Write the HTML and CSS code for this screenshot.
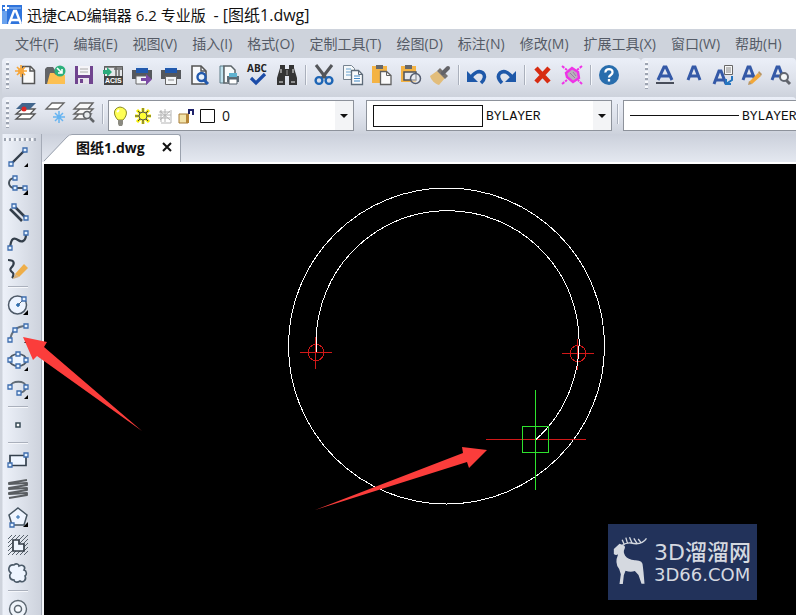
FILE: index.html
```html
<!DOCTYPE html>
<html lang="zh-CN">
<head>
<meta charset="utf-8">
<title>迅捷CAD编辑器 6.2 专业版 - [图纸1.dwg]</title>
<link rel="stylesheet" href="styles.css">
</head>
<body>
<div class="app">
  <header class="titlebar">
    <svg class="app-icon" width="20" height="21" viewBox="0 0 20 21"><path d="M0 1h20v19H0z" fill="#2f74dc"/><path d="M1 4h18M4 1v19" stroke="#a9cbf7"/><path d="M0 7h4v13H0z" fill="#69a2ee"/><path d="M3 1h2v2h2v2H5v2H3V5H1V3h2z" fill="#fff"/><path d="M7 20 12 7h2l5 13M9 16h8" fill="none" stroke="#fff" stroke-width="2.400"/></svg>
    <h1>迅捷CAD编辑器 6.2 专业版&nbsp; <span>- [图纸1.dwg]</span></h1>
  </header>

  <nav class="menubar" aria-label="菜单">
    <button>文件(F)</button><button>编辑(E)</button><button>视图(V)</button><button>插入(I)</button><button>格式(O)</button><button>定制工具(T)</button><button>绘图(D)</button><button>标注(N)</button><button>修改(M)</button><button>扩展工具(X)</button><button>窗口(W)</button><button>帮助(H)</button>
  </nav>

  <div class="row">
    <div class="toolbar standard">
      <span class="grip"></span>
      <button class="tool" aria-label="新建"><svg viewBox="0 0 20 20"><path d="M6.500 1.500h8l4 4v13h-12z" fill="#fafafa" stroke="#555" stroke-width="1.500"/><path d="M14 1v5h5" fill="none" stroke="#555" stroke-width="1.500"/><path d="M5 0v12M-1 6h12M1 2l8 8M9 2l-8 8" stroke="#f6a63b" stroke-width="1.700"/><circle cx="5" cy="6" r="3" fill="#f6a63b"/></svg></button>
      <button class="tool" aria-label="打开"><svg viewBox="0 0 20 20"><path d="M0 19V4l2-2h6l2 3h6v14z" fill="#626468"/><path d="m2 19 3-11h4l2 2h9v9z" fill="#fcc052"/><circle cx="15" cy="6" r="5.500" fill="#2cb07c"/><path d="m12 3 5 5m0-4v4h-4" fill="none" stroke="#fff" stroke-width="1.600"/></svg></button>
      <button class="tool" aria-label="保存"><svg viewBox="0 0 20 20"><path d="M1 1h18v18H1z" fill="#70448f"/><path d="M4 1h12v9H4z" fill="#f5f4f8"/><path d="M6 4h8M6 7h8" stroke="#aaa"/><path d="M4 13h11v6H4z" fill="#e7e4ec"/><path d="M6 14h3v4H6z" fill="#70448f"/></svg></button>
      <button class="tool" aria-label="导入ACIS"><svg viewBox="0 0 20 20"><path d="M1.500 1.500h18v11h-18z" fill="#e4e7ea" stroke="#555"/><path d="M1 2h19M13 2v9M16 5v6M11 4h8" stroke="#666" stroke-width="1.500"/><path d="M0 5h4V2l5 5-5 5V9H0z" fill="#2baa7b"/><path d="M1 11h19v9H1z" fill="#444"/><text x="2" y="18" class="acis">ACIS</text></svg></button>
      <button class="tool" aria-label="输出"><svg viewBox="0 0 20 20"><path d="M0 5h20v9H0z" fill="#55585d"/><path d="M4 0h12v5H4z" fill="#dce7f6"/><path d="M4 3h12v5H4z" fill="#2259ad"/><path d="M4 11h11v8H4z" fill="#f4f6f8" stroke="#666"/><path d="M9 13h5V9l6 5.500-6 5.500v-4H9z" fill="#7b4aa5"/></svg></button>
      <button class="tool" aria-label="打印"><svg viewBox="0 0 20 20"><path d="M0 5h20v9H0z" fill="#55585d"/><path d="M4 0h12v5H4z" fill="#dce7f6"/><path d="M4 3h12v5H4z" fill="#2259ad"/><path d="M4.500 11.500h11v8h-11z" fill="#f4f6f8" stroke="#666"/><path d="M7 15h6" stroke="#888"/></svg></button>
      <button class="tool" aria-label="打印预览"><svg viewBox="0 0 20 20"><path d="M2 1h9l5 5v13H2z" fill="#f8f9fb" stroke="#555" stroke-width="1.600"/><path d="M11 1v5h5" fill="none" stroke="#555" stroke-width="1.400"/><circle cx="11.500" cy="12" r="4" fill="#e9f1fa" stroke="#2259ad" stroke-width="2.400"/><path d="m14 15 4 4" stroke="#2259ad" stroke-width="3"/></svg></button>
      <button class="tool" aria-label="页面设置"><svg viewBox="0 0 20 20"><path d="M1 1h4v17H1z" fill="#bfe2ee" stroke="#5b7b87"/><path d="M5 1h7l4 4v13H5z" fill="#f7fafb" stroke="#5b6368" stroke-width="1.500"/><path d="M8 11h12v6H8z" fill="#5f6d78"/><path d="M10 8h8v4h-8z" fill="#5fb2d0"/><path d="M10 14h8v5h-8z" fill="#fff" stroke="#55616a"/></svg></button>
      <button class="tool" aria-label="拼写检查"><svg viewBox="0 0 20 20"><text x="-1" y="7" class="abc">ABC</text><path d="m3 13 5 5 9-9" fill="none" stroke="#1c4ca8" stroke-width="3.200"/></svg></button>
      <button class="tool" aria-label="查找"><svg viewBox="0 0 20 20"><path d="M3 3V0h5v4h4V0h5v3l3 10v7h-8v-9H8v9H0v-7z" fill="#343434"/><path d="M4 4v4M16 4v4M2 17h4M14 17h4" stroke="#eee"/><path d="M10 5v5" stroke="#999"/></svg></button>
      <span class="sep"></span>
      <button class="tool" aria-label="剪切"><svg viewBox="0 0 20 20"><path d="m2 0 10 13M18 0 8 13" stroke="#54565a" stroke-width="3"/><circle cx="5" cy="15.500" r="3.400" fill="none" stroke="#1d65b5" stroke-width="2.400"/><circle cx="15" cy="15.500" r="3.400" fill="none" stroke="#1d65b5" stroke-width="2.400"/></svg></button>
      <button class="tool" aria-label="复制"><svg viewBox="0 0 20 20"><path d="M.5.500h8l3 3v11H.500z" fill="#f5f8fa" stroke="#768390"/><path d="M3 4h5M3 7h5M3 10h5" stroke="#68a2cf"/><path d="M8.500 5.500h7l4 4v10h-11z" fill="#f8fafc" stroke="#5e6b79" stroke-width="1.300"/><path d="M11 11h6M11 13.500h6M11 16h6" stroke="#4188c5"/><path d="M15.500 5.500v4h4" fill="none" stroke="#5e6b79"/></svg></button>
      <button class="tool" aria-label="粘贴"><svg viewBox="0 0 20 20"><path d="M0 1h15v17H0z" fill="#f4b344"/><path d="M4 0h7v4H4z" fill="#66686c"/><path d="M8.500 6.500h6l4.500 4v9H8.500z" fill="#fafafa" stroke="#606060" stroke-width="1.300"/><path d="M14.500 6.500v4H19" fill="none" stroke="#606060"/></svg></button>
      <button class="tool" aria-label="选择性粘贴"><svg viewBox="0 0 20 20"><path d="M0 1h15v16H0z" fill="#f4b344"/><path d="M4 0h7v4H4z" fill="#66686c"/><path d="M3 7h12v8H3z" fill="#e6e9ef" stroke="#4f535b" stroke-width="1.500"/><circle cx="14.500" cy="13.500" r="5" fill="#edf0f5" fill-opacity=".5" stroke="#555d70" stroke-width="1.500"/></svg></button>
      <button class="tool" aria-label="格式刷"><svg viewBox="0 0 20 20"><path d="m0 11 7-5 8 7-6 7c-4-1-8-5-9-9z" fill="#e2bd7b"/><path d="m7 6 3-3 8 8-3 3z" fill="#77736f"/><path d="m13 8 5-5" stroke="#626267" stroke-width="4" stroke-linecap="round"/></svg></button>
      <span class="sep"></span>
      <button class="tool" aria-label="撤销"><svg viewBox="0 0 20 20"><path d="M3 14C7 7 12 5 16 8c3 3 1 7-2 10" fill="none" stroke="#1e58a9" stroke-width="3.500"/><path d="M0 6v11h11z" fill="#1e58a9"/></svg></button>
      <button class="tool" aria-label="重做"><svg viewBox="0 0 20 20"><path d="M17 14C13 7 8 5 4 8c-3 3-1 7 2 10" fill="none" stroke="#1e58a9" stroke-width="3.500"/><path d="M20 6v11H9z" fill="#1e58a9"/></svg></button>
      <span class="sep"></span>
      <button class="tool" aria-label="删除"><svg viewBox="0 0 20 20"><path d="m3 3 13 14M16 3 3 17" stroke="#d72c12" stroke-width="4.500"/></svg></button>
      <button class="tool" aria-label="清理"><svg viewBox="0 0 20 20"><path d="m10 3 6 4 1 6-6 4-6-5-1-4z" fill="#b9afbd" stroke="#ef32e7" stroke-width="2.400"/><path d="m0 1 5 4M20 1l-5 4M0 19l5-4M20 19l-4-4" stroke="#ef32e7" stroke-width="2" stroke-dasharray="3 1"/><path d="m8 8 5 5M11 7l3 4" stroke="#9b7fa0"/></svg></button>
      <span class="sep"></span>
      <button class="tool" aria-label="帮助"><svg viewBox="0 0 20 20"><circle cx="10" cy="10" r="10" fill="#286dad"/><path d="M6.500 7.500C6 3 14 3 13.500 7.500c0 2.500-3.500 2.500-3.500 5M10 14v2.500" fill="none" stroke="#fff" stroke-width="2.300"/></svg></button>
    </div>
    <div class="toolbar textbar">
      <span class="grip"></span>
      <button class="tool" aria-label="多行文字"><svg viewBox="0 0 20 20"><path d="M3 15 9 2h2l6 13M6 11h8" fill="none" stroke="#3459a7" stroke-width="3"/><path d="M1 18h18" stroke="#484d59" stroke-width="2"/></svg></button>
      <button class="tool" aria-label="单行文字"><svg viewBox="0 0 20 20"><path d="M4 15 9 2h2l5 13M6 11h8" fill="none" stroke="#3459a7" stroke-width="3"/></svg></button>
      <button class="tool" aria-label="文字替换"><svg viewBox="0 0 20 20"><path d="M1 19 6 6h2l5 13M3 15h8" fill="none" stroke="#3459a7" stroke-width="3"/><path d="M11.500.500h8v9h-8z" fill="#f7f7f7" stroke="#666"/><path d="M13 3h5M13 5h5M13 7h5" stroke="#888"/><path d="M19 11v4l-6 4m0-5v5h5" fill="none" stroke="#2475bf" stroke-width="2"/></svg></button>
      <button class="tool" aria-label="编辑文字"><svg viewBox="0 0 20 20"><path d="M1 15 6 2h2l5 13M3 11h8" fill="none" stroke="#3459a7" stroke-width="3"/><path d="m7 17 9-9 3 3-9 8z" fill="#f2a83a"/><path d="m17 6 3 3-1 2-3-3zM7 16l-1 4 4-1z" fill="#b99664"/></svg></button>
      <button class="tool" aria-label="查找文字"><svg viewBox="0 0 20 20"><path d="M1 15 6 2h2l5 13M3 11h8" fill="none" stroke="#3459a7" stroke-width="3"/><circle cx="13" cy="12" r="4" fill="#f5f7f8" stroke="#626771" stroke-width="2"/><path d="m15 15 4 4" stroke="#62656c" stroke-width="3"/></svg></button>
    </div>
  </div>

  <div class="row">
    <div class="toolbar layers">
      <span class="grip"></span>
      <button class="tool" aria-label="图层"><svg viewBox="0 0 20 20"><path d="M0 17h14l5-5H6zM0 12h14l5-5H6z" fill="#fff" stroke="#555" stroke-width="1.300"/><path d="M0 7h14l6-6H6z" fill="#42668d"/><circle cx="8" cy="7" r="2.500" fill="#df2524"/></svg></button>
      <button class="tool" aria-label="图层冻结"><svg viewBox="0 0 20 20"><path d="M1 7h12l6-6H7z" fill="#fff" stroke="#666" stroke-width="1.300"/><path d="M14 9v12M8 15h12M10 11l8 8M18 11l-8 8" stroke="#66b4f1" stroke-width="1.500"/></svg></button>
      <button class="tool" aria-label="图层浏览"><svg viewBox="0 0 20 20"><path d="M0 17h12l5-5H5zM0 12h14l5-5H6zM0 7h14l5-6H6z" fill="#f9f9f9" stroke="#666" stroke-width="1.400"/><circle cx="13" cy="13" r="3.500" fill="#e8ebed" stroke="#606367" stroke-width="1.700"/><path d="m16 16 4 4" stroke="#606367" stroke-width="2.500"/></svg></button>
      <span class="sep"></span>
      <div class="combo layer">
        <svg width="18" height="20" viewBox="0 0 18 20"><path d="M6 14C1 9 1 2 8 1c8 1 8 8 3 13z" fill="#ffff55" stroke="#8a8a24"/><path d="M6 14h5v4l-1 2H7l-1-2z" fill="#8b8a80"/><path d="M5 6 7 4" stroke="#fff" stroke-width="2"/></svg>
        <svg width="18" height="20" viewBox="0 0 18 20"><path d="M9 2v16M1 10h16M3 4l12 12M15 4 3 16" stroke="#f4ec00" stroke-width="3"/><path d="M9 2v4M9 14v4M1 10h4M13 10h4M4 5l2 2M14 5l-2 2M4 15l2-2M14 15l-2-2" stroke="#444"/><circle cx="9" cy="10" r="4" fill="#ff3" stroke="#555"/></svg>
        <svg width="18" height="20" viewBox="0 0 18 20"><path d="M15 4v13H5M9 3v13M2 9h13M4 5l10 9M14 5 4 14M5 4v12M2 12h12M3 6h11" fill="none" stroke="#b4b4b4"/></svg>
        <svg width="18" height="20" viewBox="0 0 18 20"><path d="M1 8h9v9H1z" fill="#f2e2a8" stroke="#a57b36"/><path d="M8 8h3v9H8z" fill="#b68638"/><path d="M11 8V4h4v5" fill="none" stroke="#20236b" stroke-width="2"/></svg>
        <svg width="16" height="20" viewBox="0 0 16 20"><path d="M.5 3.500h14v13H.5z" fill="#fff" stroke="#111"/></svg>
        <select class="layer-name" aria-label="当前图层"><option>0</option></select>
        <span class="arrow shaded"></span>
      </div>
      <div class="combo color">
        <span class="swatch"></span>
        <select aria-label="颜色"><option>BYLAYER</option></select>
        <span class="arrow"></span>
      </div>
      <span class="sep"></span>
      <div class="combo linetype">
        <span class="line"></span>
        <select aria-label="线型"><option>BYLAYER</option></select>
        <span class="arrow"></span>
      </div>
    </div>
  </div>

  <div class="workspace">
    <aside class="drawbar" aria-label="绘图工具">
      <span class="grip-h"></span>
      <button class="draw" aria-label="直线"><svg viewBox="0 0 20 20"><path d="M3 17 17 3" stroke="#333e4a" stroke-width="2.400"/><path class="node" d="M1 15h4v4H1zM15 1h4v4h-4z"/><path d="M20 16v4h-4z"/></svg></button>
      <button class="draw" aria-label="多段线"><svg viewBox="0 0 20 20"><path d="M7 3C-1 3-1 13 7 13h11" fill="none" stroke="#46515c" stroke-width="2"/><path class="node" d="M5 1h4v4H5zM5 11h4v4H5zM15 11h4v4h-4z"/><path d="M20 15v5h-5z"/></svg></button>
      <button class="draw" aria-label="双线"><svg viewBox="0 0 20 20"><path d="m6 3 12 12M2 6l12 12" stroke="#333e4a" stroke-width="2.600"/><path class="node" d="M4 1h4v4H4zM16 13h4v4h-4z"/></svg></button>
      <button class="draw" aria-label="样条曲线"><svg viewBox="0 0 20 20"><path d="M2 17c1-10 4-11 8-8s8 1 8-6" fill="none" stroke="#333e4a" stroke-width="2.200"/><path class="node" d="M0 15h4v4H0zM16 0h4v4h-4z"/></svg></button>
      <button class="draw" aria-label="徒手画"><svg viewBox="0 0 20 20"><path d="M0 1c7 0 7 4 3 8-2 2 1 4 2 5s0 4-1 5" fill="none" stroke="#333e4a" stroke-width="2.200"/><path d="m7 15 9-10 4 4-9 9z" fill="#eeae49"/><path d="m7 15-2 5 6-2z" fill="#d5b07d"/></svg></button>
      <span class="sep-h"></span>
      <button class="draw" aria-label="圆"><svg viewBox="0 0 20 20"><circle cx="9.500" cy="10" r="9" fill="#edf4ff" stroke="#4d5967" stroke-width="1.500"/><path d="m10 10 6-6" stroke="#555f6b"/><path d="M8 10h4M10 8v4" stroke="#2869ad" stroke-width="1.500"/><path class="node" d="M14 2h4v4h-4z"/><path d="M20 15v5h-5z"/></svg></button>
      <button class="draw" aria-label="圆弧"><svg viewBox="0 0 20 20"><path d="M2 18C3 9 8 3 18 3" fill="none" stroke="#65707b" stroke-width="2"/><path class="node" d="M0 15h4v4H0zM5 5h4v4H5zM16 1h4v4h-4z"/><path d="M20 16v4h-4z"/></svg></button>
      <button class="draw" aria-label="椭圆"><svg viewBox="0 0 20 20"><ellipse cx="10" cy="9" rx="8.500" ry="6" fill="#edf5ff" stroke="#4d5967" stroke-width="1.700"/><path class="node" d="M8 1h4v4H8zM0 7h4v4H0zM16 7h4v4h-4zM8 13h4v4H8z"/><path d="M20 16v4h-4z"/></svg></button>
      <button class="draw" aria-label="椭圆弧"><svg viewBox="0 0 20 20"><path d="M2 8c1-7 16-7 16 0 0 4-4 6-8 6" fill="none" stroke="#606b76" stroke-width="2"/><path class="node" d="M0 6h4v4H0zM16 6h4v4h-4zM9 12h4v4H9z"/><path d="M20 16v4h-4z"/></svg></button>
      <span class="sep-h"></span>
      <button class="draw" aria-label="点"><svg viewBox="0 0 20 20"><path d="M8 8h4v4H8z" fill="#fff" stroke="#394b56" stroke-width="1.500"/></svg></button>
      <span class="sep-h"></span>
      <button class="draw" aria-label="矩形"><svg viewBox="0 0 20 20"><path d="M2 4.500h16v10H2z" fill="#eef5ff" stroke="#34414e" stroke-width="1.700"/><path class="node" d="M0 12h4v4H0zM16 2h4v4h-4z"/></svg></button>
      <button class="draw" aria-label="螺旋"><svg viewBox="0 0 20 20"><path d="M19 1 1 4v1l18-1v2L1 9v1l18-1v2L1 14v1l18-1v2L1 19" fill="none" stroke="#595d61" stroke-width="1.900" stroke-linejoin="round"/></svg></button>
      <button class="draw" aria-label="多边形"><svg viewBox="0 0 20 20"><path d="m10 1 9 7-3 10H4L1 8z" fill="#eff5ff" stroke="#455461" stroke-width="1.500"/><path d="M8 10h4M10 8v4" stroke="#2869ad"/><path class="node" d="M2 16h4v4H2z"/><path d="M20 15v5h-5z"/></svg></button>
      <button class="draw" aria-label="填充"><svg viewBox="0 0 20 20"><path d="m0 4 4-4M0 8l8-8M0 12 12 0M0 16 16 0M0 20 20 0M4 20 20 4M8 20 20 8M12 20l8-8M16 20l4-4" stroke="#56616b"/><path d="M5 5h6v4h5v7H5z" fill="#eef5ff" stroke="#343e48" stroke-width="1.700"/></svg></button>
      <button class="draw" aria-label="云线"><svg viewBox="0 0 20 20"><path d="M3 10C-1 7 1 1 6 2c2-2 5-1 5 1 4-2 7 1 5 4 3 1 3 5 1 6 2 4-2 7-5 5-3 2-6 1-6-1-5 0-5-5-3-7z" fill="#eef5ff" stroke="#4b5a68" stroke-width="1.600"/></svg></button>
      <span class="sep-h"></span>
      <button class="draw" aria-label="圆环"><svg viewBox="0 0 20 20"><circle cx="10" cy="10" r="8.500" fill="#eff4fa" stroke="#5b6670" stroke-width="1.400"/><circle cx="10" cy="10" r="3.500" fill="#f8fbff" stroke="#5b6670" stroke-width="1.500"/></svg></button>
    </aside>

    <main class="document">
      <div class="tabs">
        <svg class="tab-slope" width="28" height="28" viewBox="0 0 28 28"><path d="M0 28 23 3Q25 0 28 0V28z" fill="#fff"/><path d="M0 27 23 3Q25 .5 28 .5" fill="none" stroke="#9ba2ae"/></svg>
        <div class="tab">
          <span>图纸1.dwg</span>
          <button class="close" aria-label="关闭"><svg width="10" height="10" viewBox="0 0 10 10"><path d="m1 1 8 8M9 1 1 9" stroke="#111" stroke-width="2"/></svg></button>
        </div>
      </div>
      <div class="canvas">
        <svg class="drawing" width="752" height="451" viewBox="44 164 752 451">
          <g fill="none" shape-rendering="crispEdges">
            <circle cx="446.500" cy="346" r="158" stroke="#fff"/>
            <g stroke="#d01818"><circle cx="316" cy="352.500" r="8"/><path d="M300 352.500h32M315.500 337v32"/><circle cx="578" cy="353.500" r="8"/><path d="M562 353.500h32M577.500 339v31M486 439.500h100"/></g>
            <path d="M316.500 352.500A131.500 131.500 0 1 1 535.500 440" stroke="#fff"/>
            <path d="M535.500 390v100M522.500 426.500h26v26h-26z" stroke="#2ee22e"/>
          </g>
          <path d="m315 510 148-57-1-6 25 3-18 18-2-6z" fill="#fb3d3b"/>
        </svg>
        <div class="brand">
          <svg width="37" height="50" viewBox="36 60 110 150"><path d="M41 96 58 80l12 5q7 3 3 11-5 9 2 20 8 11 29 14 25-1 24 18l2 17 3 35h-9l-9-26-11-12q-13 5-28-1l-5 14-3 26H58l4-29-5-16q-15-17-3-44-7 4-13-1z" fill="#d5d9e0"/><path d="M66 85q13-9 27-7 31 8 46-14M72 82l-6-14M82 79l-5-17M96 79l-8-18M111 80l-10-16M122 76l-8-10" fill="none" stroke="#d5d9e0" stroke-width="4"/></svg>
          <div class="brand-text"><strong>3D溜溜网</strong><span>3D66.COM</span></div>
        </div>
      </div>
    </main>
    <svg class="pointer" width="120" height="94" viewBox="23 337 120 94"><path d="m23 337 24 5-3 5 98 84-105-75-4 4z" fill="#fb3d3b"/></svg>
  </div>
</div>
</body>
</html>
```
FILE: styles.css
```css
* {
  box-sizing: border-box;
}

body {
  margin: 0;
  background: #ced3dc;
  color: #111;
  font-family: "Open Sans", "Noto Sans CJK SC", sans-serif;
  font-size: 14px;
}

button {
  margin: 0;
  padding: 0;
  border: 0;
  background: none;
  color: inherit;
  font: inherit;
}

svg {
  display: block;
  flex: none;
}

.app {
  display: flex;
  flex-direction: column;
  height: 100vh;
  overflow: hidden;
}

.titlebar {
  display: flex;
  flex: none;
  align-items: center;
  gap: 5px;
  height: 29px;
  padding-left: 2px;
  background: #fff;
}

.titlebar h1 {
  margin: 0;
  font-size: 15px;
  font-weight: 400;
  line-height: 28px;
  white-space: pre;
}

.titlebar h1 span {
  font-size: 16px;
}

.menubar {
  display: flex;
  flex: none;
  gap: 15px;
  height: 29px;
  padding-left: 15px;
  color: #555b66;
}

.menubar button {
  flex: none;
  line-height: 26px;
  white-space: nowrap;
}

.row {
  display: flex;
  flex: none;
  padding-left: 2px;
}

.toolbar {
  display: flex;
  flex: none;
  background: linear-gradient(#ebeff8, #dfe3ec 50%, #cdd2dc);
  border-radius: 4px 4px 0 0;
  padding-left: 4px;
}

.standard,
.textbar {
  height: 39px;
  padding-bottom: 5px;
}

.standard {
  padding-right: 17px;
}

.textbar,
.layers {
  flex: 1;
  min-width: 0;
  overflow: hidden;
}

.layers {
  height: 37px;
  padding-top: 3px;
  align-items: flex-start;
}

.grip {
  flex: none;
  width: 3px;
  height: 28px;
  margin: 3px 3px 0 0;
  background: repeating-linear-gradient(#f7f9fc 0 2px, #9da4b1 2px 4px, transparent 4px 5px);
}

.layers .grip {
  margin-top: 0;
}

.tool {
  flex: none;
  width: 29px;
  padding: 0 5px 0 4px;
}

.layers .tool {
  height: 24px;
}

.tool svg,
.draw svg {
  width: 20px;
  height: 20px;
  overflow: visible;
}

.acis {
  fill: #fff;
  font: bold 7px "Liberation Sans", sans-serif;
}

.abc {
  fill: #222;
  font: bold 10px "Open Sans", sans-serif;
}

.sep {
  flex: none;
  width: 2px;
  height: 20px;
  margin: 7px 3px;
  border-left: 1px solid #aab0bc;
  border-right: 1px solid #f5f7fb;
}

.layers .sep {
  margin: 4px 4px 4px 3px;
}

.combo {
  display: flex;
  flex: none;
  align-items: center;
  width: 246px;
  height: 31px;
  border: 1px solid #8d929b;
  background: #fff;
}

.combo select {
  flex: 1;
  min-width: 0;
  padding: 2px 0 0;
  border: 0;
  background: none;
  color: #111;
  appearance: none;
  font-family: "Liberation Mono", monospace;
  font-size: 13px;
}

.combo .layer-name {
  margin-left: 2px;
  padding: 0;
  font-family: "Open Sans", sans-serif;
  font-size: 14px;
}

.layer {
  gap: 4px;
  padding-left: 3px;
}

.color {
  margin: 0 2px 0 12px;
  padding-left: 6px;
}

.linetype {
  padding-left: 6px;
}

.swatch {
  width: 110px;
  height: 22px;
  margin-right: 3px;
  border: 1px solid #111;
}

.line {
  width: 109px;
  margin-right: 3px;
  border-top: 1px solid #111;
}

.arrow {
  display: flex;
  align-items: center;
  justify-content: center;
  width: 18px;
  height: 29px;
  background: #f3f4f6;
}

.arrow::after {
  content: "";
  border: 4px solid transparent;
  border-top-color: #111;
  border-bottom: 0;
}

.workspace {
  position: relative;
  display: flex;
  flex: 1;
  min-height: 0;
}

.drawbar {
  display: flex;
  flex: none;
  flex-direction: column;
  width: 42px;
  padding: 4px 0 0 8px;
  border-right: 1px solid #a5abb7;
  background: linear-gradient(90deg, #ced3dc 2px, #edf1f9 3px, #dee3ec 50%, #cdd2dc);
  overflow: hidden;
}

.grip-h {
  flex: none;
  width: 32px;
  height: 3px;
  margin: 0 0 2px -4px;
  background: repeating-linear-gradient(90deg, #9da4b1 0 2px, #f7f9fc 2px 4px, transparent 4px 5px);
}

.draw {
  flex: none;
  width: 20px;
  height: 28px;
  padding: 4px 0;
}

.node {
  fill: #e6f2ff;
  stroke: #3e6daf;
  stroke-width: 1.3px;
}

.sep-h {
  flex: none;
  width: 20px;
  height: 2px;
  margin: 3px 0;
  border-top: 1px solid #aab0bc;
  border-bottom: 1px solid #f5f7fb;
}

.document {
  display: flex;
  flex: 1;
  flex-direction: column;
  min-width: 0;
  padding-left: 2px;
  background: #f3f5f9;
}

.tabs {
  display: flex;
  flex: none;
  height: 30px;
  margin-left: -2px;
  background: linear-gradient(#cbd0db, #e4e8f0);
  border-bottom: 2px solid #fff;
}

.tab-slope {
  margin-left: 2px;
}

.tab {
  display: flex;
  align-items: center;
  gap: 17px;
  height: 28px;
  padding: 0 8px 4px 4px;
  border: 1px solid #9ba2ae;
  border-width: 1px 1px 0 0;
  border-radius: 0 3px 0 0;
  background: #fff;
  font-weight: 700;
}

.canvas {
  position: relative;
  flex: 1;
  min-height: 0;
  overflow: hidden;
  background: #000;
}

.brand {
  position: absolute;
  right: 39px;
  bottom: 15px;
  display: flex;
  align-items: center;
  gap: 5px;
  width: 149px;
  height: 76px;
  padding-left: 4px;
  background: #22325a;
  color: #d5d9e0;
  font-family: "DejaVu Sans", "Noto Sans CJK SC", sans-serif;
}

.brand-text {
  display: flex;
  flex-direction: column;
  white-space: nowrap;
}

.brand-text strong {
  font-size: 22px;
  font-weight: 500;
  line-height: 26px;
}

.brand-text span {
  font-size: 18px;
  line-height: 18px;
}

.pointer {
  position: absolute;
  left: 23px;
  top: 203px;
}
```
